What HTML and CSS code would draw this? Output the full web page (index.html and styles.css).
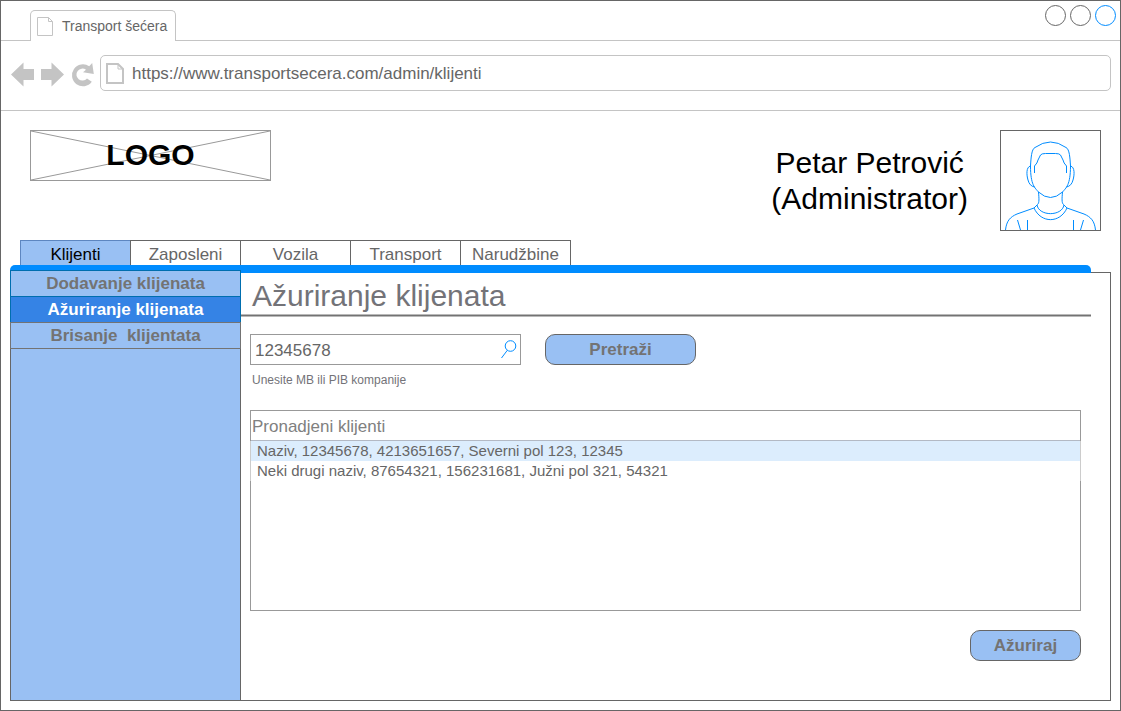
FILE: index.html
```html
<!DOCTYPE html>
<html lang="sr-Latn">
<head>
<meta charset="utf-8">
<meta name="viewport" content="width=device-width, initial-scale=1">
<title>Transport šećera</title>
<link rel="stylesheet" href="styles.css">
</head>
<body>
<div class="window">
  <div class="tab-strip">
    <div class="browser-tab">
      <svg class="page-icon" width="16" height="19" viewBox="0 0 16 19" aria-hidden="true"><path d="M.5.5h11l4 4v14H.5zM11.500.5v4h4"/></svg>
      <span>Transport šećera</span>
    </div>
    <div class="window-controls">
      <button class="window-button" type="button" aria-label="Minimize"></button>
      <button class="window-button" type="button" aria-label="Maximize"></button>
      <button class="window-button window-close" type="button" aria-label="Close"></button>
    </div>
  </div>

  <div class="toolbar">
    <button class="tool" type="button" aria-label="Back"><svg width="23" height="25" viewBox="0 0 23 25"><path d="M0 12.500 12.500.5V7H23v11H12.500v6.500z"/></svg></button>
    <button class="tool" type="button" aria-label="Forward"><svg width="23" height="25" viewBox="0 0 23 25"><path d="M23 12.500 10.500.5V7H0v11h10.500v6.500z"/></svg></button>
    <button class="tool" type="button" aria-label="Reload"><svg class="reload" width="22" height="25" viewBox="-1 0 22 25"><path d="M17.200 4.200 20.200 1l1.600 11L11 10.200l3-2.400A6 6 0 1 0 15 16.500l4.800 3.300A11 11 0 1 1 17.200 4.200z"/></svg></button>
    <label class="address">
      <svg class="page-icon page-icon-bold" width="18" height="21" viewBox="0 0 18 21" aria-hidden="true"><path d="M1 1h11l5 5v14H1z"/><path class="fold" d="M12 1v5h5"/></svg>
      <input class="address-input" type="text" aria-label="Address" value="https://www.transportsecera.com/admin/klijenti">
    </label>
  </div>

  <header class="header">
    <div class="logo">
      <svg class="logo-cross" viewBox="0 0 239 49" preserveAspectRatio="none" aria-hidden="true"><path d="M0 0 239 49M0 49 239 0"/></svg>
      <span class="logo-text">LOGO</span>
    </div>
    <div class="user">
      <div class="user-name">Petar Petrović<br>(Administrator)</div>
      <svg class="avatar" width="99" height="99" viewBox="0 0 99 99" aria-hidden="true">
        <path d="M29.500 35C30 27 30.500 18 34 16.500Q49.500 5.500 65 16.500C68.500 18 69 27 69.500 35C69.500 54 65 57 61.500 61Q49.500 72 37.500 61C34 57 29.500 54 29.500 35z"/>
        <path d="M33.500 42v-7q3-3 3.500-6l2.500-5q1-1.500 5-1.500h10q4 0 5 1.500l2.500 5q.5 3 3.500 6v7"/>
        <path d="M29.500 35C25 36 25.500 44 27 49Q28.500 55 33.500 56M69.500 35C74 36 73.500 44 72 49Q70.500 55 65.500 56"/>
        <path d="M37.500 61C38 67 38.500 72 36.500 73.500L33 77C40 92.500 59 92.500 66 77L62.500 73.500C60.500 72 61 67 61.500 61M36 74C38 85.500 61 85.500 63 74"/>
        <path d="M4.500 99C5.500 90 9 86 16 83L33 77M94.500 99C93.500 90 90 86 83 83L66 77M16.500 89l3 10M26.500 89v10M72.500 89v10M82.500 89l-3 10"/>
      </svg>
    </div>
  </header>

  <nav class="tabs" aria-label="Glavni meni">
    <a class="tab tab-active" href="#klijenti" aria-current="page">Klijenti</a>
    <a class="tab" href="#zaposleni">Zaposleni</a>
    <a class="tab" href="#vozila">Vozila</a>
    <a class="tab" href="#transport">Transport</a>
    <a class="tab" href="#narudzbine">Narudžbine</a>
  </nav>
  <div class="tab-bar"></div>

  <div class="panel">
    <nav class="sidebar" aria-label="Klijenti">
      <a class="side-link" href="#dodavanje">Dodavanje klijenata</a>
      <a class="side-link side-link-active" href="#azuriranje" aria-current="page">Ažuriranje klijenata</a>
      <a class="side-link side-link-last" href="#brisanje">Brisanje&nbsp; klijentata</a>
    </nav>
    <main class="content">
      <h1 class="title">Ažuriranje klijenata</h1>
      <form class="form">
        <div class="search-row">
          <div class="search-box">
            <input class="search-input" id="search" type="text" value="12345678" aria-label="MB ili PIB" aria-describedby="hint">
            <svg class="search-icon" width="16" height="19" viewBox="0 0 16 19" aria-hidden="true"><circle cx="9.500" cy="6" r="5.300"/><path d="M6.300 10.300.5 18"/></svg>
          </div>
          <button class="button button-search" type="button">Pretraži</button>
        </div>
        <label class="hint" id="hint" for="search">Unesite MB ili PIB kompanije</label>
        <section class="results">
          <h2 class="results-title" id="results-title">Pronadjeni klijenti</h2>
          <ul class="results-list" role="listbox" aria-labelledby="results-title">
            <li class="result result-selected" role="option" aria-selected="true">Naziv, 12345678, 4213651657, Severni pol 123, 12345</li>
            <li class="result" role="option" aria-selected="false">Neki drugi naziv, 87654321, 156231681, Južni pol 321, 54321</li>
          </ul>
        </section>
        <button class="button button-update" type="button">Ažuriraj</button>
      </form>
    </main>
  </div>
</div>
</body>
</html>
```

FILE: styles.css
```css
* { box-sizing: border-box; }

body {
  margin: 0;
  background: #fff;
  color: #666;
  font-family: "Liberation Sans", Arial, sans-serif;
  font-size: 17px;
  line-height: 20px;
}

button, input { font: inherit; color: inherit; }
a { color: inherit; text-decoration: none; }

.window {
  display: flex;
  flex-direction: column;
  min-height: 100vh;
  border: 1px solid #666;
}

/* Browser chrome */
.tab-strip {
  display: flex;
  align-items: flex-end;
  justify-content: space-between;
  height: 40px;
  padding: 0 4px 0 29px;
  border-bottom: 1px solid #c4c4c4;
}

.browser-tab {
  display: flex;
  align-items: center;
  gap: 9px;
  height: 31px;
  margin-bottom: -1px;
  padding: 0 8px 0 6px;
  border: 1px solid #c4c4c4;
  border-bottom: 0;
  border-radius: 5px 5px 0 0;
  background: #fff;
  font-size: 14px;
}

.page-icon { flex: none; fill: none; stroke: #c4c4c4; }
.page-icon-bold { stroke-width: 2; }
.fold { stroke-width: 1; }

.window-controls {
  display: flex;
  align-self: flex-start;
  gap: 4px;
  padding-top: 4px;
}

.window-button {
  width: 21px;
  height: 21px;
  padding: 0;
  border: 1px solid #666;
  border-radius: 50%;
  background: #fff;
}
.window-close { border-color: #008cff; }

.toolbar {
  display: flex;
  align-items: center;
  gap: 7px;
  height: 70px;
  padding: 0 9px 2px 10px;
  border-bottom: 1px solid #c4c4c4;
}

.tool {
  display: flex;
  padding: 0;
  border: 0;
  background: none;
  fill: #c4c4c4;
}
.reload { overflow: visible; }

.address {
  display: flex;
  flex: 1;
  align-items: center;
  gap: 8px;
  height: 36px;
  margin-bottom: 4px;
  padding: 2px 5px 0;
  border: 1px solid #c4c4c4;
  border-radius: 5px;
}

.address-input {
  flex: 1;
  min-width: 0;
  padding: 0;
  border: 0;
  outline: 0;
  background: none;
}

/* Page header */
.header {
  display: flex;
  align-items: flex-start;
  justify-content: space-between;
  padding: 19px 19px 9px 29px;
}

.logo {
  display: grid;
  place-items: center;
  width: 241px;
  height: 51px;
  border: 1px solid #999;
}
.logo-cross, .logo-text { grid-area: 1 / 1; }
.logo-cross { width: 100%; height: 49px; stroke: #999; }
.logo-text {
  padding-bottom: 2px;
  color: #000;
  font-size: 30px;
  font-weight: bold;
  line-height: 36px;
}

.user { display: flex; gap: 32px; }
.user-name {
  padding-top: 15px;
  color: #000;
  font-size: 30px;
  line-height: 36px;
  text-align: center;
}
.avatar {
  box-sizing: content-box;
  border: 1px solid #666;
  fill: none;
  stroke: #008cff;
}

/* Main tabs */
.tabs { display: flex; padding-left: 19px; }
.tab {
  width: 110px;
  height: 26px;
  padding: 4px 0 0;
  border: 1px solid #666;
  border-right: 0;
  text-align: center;
}
.tab:last-child { width: 111px; border-right: 1px solid #666; }
.tab-active { border-color: #5d86c0; background: #99c0f3; color: #000; }

.tab-bar {
  z-index: 1;
  height: 8px;
  margin: -1px 29px -1px 9px;
  border-radius: 5px 5px 0 0;
  background: #008cff;
}

.panel {
  display: flex;
  flex: 1;
  margin: 0 9px 9px;
  border: 1px solid #666;
}

.sidebar {
  z-index: 2;
  display: flex;
  flex-direction: column;
  width: 231px;
  margin: -3px 0 0 -1px;
  border: 1px solid #666;
  border-width: 0 1px;
  background: #99c0f3;
}

.side-link {
  height: 26px;
  margin: 0 -1px;
  padding-top: 3px;
  border: 1px solid #006eaf;
  border-bottom: 0;
  color: #737373;
  font-weight: bold;
  text-align: center;
}
.side-link-active { background: #3583e5; color: #fff; }
.side-link-last { height: 27px; border: 1px solid #737373; }

.content { flex: 1; min-width: 0; }

/* The rule under the title has a dark core with a soft line on each side */
.title {
  margin: 0 19px 0 0;
  padding: 5px 0 2px 11px;
  border-bottom: 1px solid #737373;
  box-shadow: 0 1px #b9b9b9, inset 0 -1px #b9b9b9;
  color: #737378;
  font-size: 30px;
  font-weight: normal;
  line-height: 35px;
}

.form {
  display: flex;
  flex-direction: column;
  padding: 18px 29px 39px 9px;
}

.search-row { display: flex; gap: 24px; }

.search-box {
  display: flex;
  align-items: center;
  width: 271px;
  height: 31px;
  padding: 0 3px 0 4px;
  border: 1px solid #999;
}
.search-input {
  flex: 1;
  min-width: 0;
  padding: 2px 0 0;
  border: 0;
  outline: 0;
  background: none;
}
.search-icon { fill: none; stroke: #008cff; }

.button {
  height: 31px;
  padding: 0;
  border: 1px solid #666;
  border-radius: 10px;
  background: #99c0f3;
  color: #737373;
  font-weight: bold;
}
.button-search { width: 151px; }
.button-update { align-self: flex-end; width: 111px; margin-top: 19px; }

.hint {
  align-self: flex-start;
  padding: 5px 2px 0;
  color: #737378;
  font-size: 12px;
}

.results {
  min-height: 201px;
  margin-top: 20px;
  border: 1px solid #999;
}
.results-title {
  margin: 0;
  padding: 6px 1px 3px;
  border-bottom: 1px solid #b3b9c4;
  color: #808080;
  font-size: 17px;
  font-weight: normal;
  line-height: 20px;
}
.results-list {
  margin: 0 -1px;
  padding: 0;
  border: 1px solid #ccc;
  border-width: 0 1px;
  font-size: 15px;
  list-style: none;
}
.result { padding: 0 6px; }
.result-selected { background: #dcedfd; }
```
